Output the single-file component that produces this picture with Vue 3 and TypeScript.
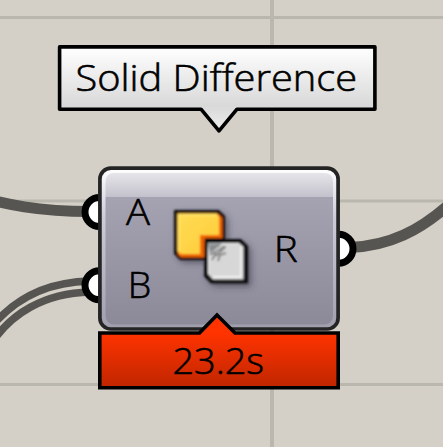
<script setup lang="ts">
interface Label { text: string; x: number; y: number; width: number }

const gridColumns: number[] = [272]
const gridRows: number[] = [17.5, 201, 384.5]

const wires = [
  { d: 'M-30 194 C5 205 40 211.5 90 211.5', width: 11 },
  { d: 'M-14 334 C12 298 48 282 90 281', width: 7.5 },
  { d: 'M-14 353 C8 311 48 293 90 292', width: 7.5 },
  { d: 'M350 247.5 C388 246 420 232 455 199', width: 11 },
]

const ports = [
  { x: 99.5, y: 212 },
  { x: 99.5, y: 285.2 },
  { x: 338.5, y: 248.8 },
]

const labels: Label[] = [
  { text: 'Solid Difference', x: 75.5, y: 91, width: 281.5 },
  { text: 'A', x: 126, y: 225, width: 24 },
  { text: 'B', x: 127.8, y: 298, width: 23.5 },
  { text: 'R', x: 273.8, y: 261.5, width: 24 },
  { text: '23.2s', x: 172.5, y: 373.5, width: 91.5 },
]
</script>

<template>
  <main class="canvas">
    <svg class="scene" width="443" height="447" viewBox="0 0 443 447">
      <defs>
        <linearGradient id="titleFill" x1="0" y1="0" x2="0" y2="1">
          <stop offset="0" stop-color="#ffffff" />
          <stop offset="0.7" stop-color="#d9d9d9" />
          <stop offset="1" stop-color="#eeeeee" />
        </linearGradient>
        <linearGradient id="bodyFill" x1="0" y1="0" x2="0" y2="1">
          <stop offset="0" stop-color="#a5a3b2" />
          <stop offset="1" stop-color="#8c8a99" />
        </linearGradient>
        <linearGradient id="edgeFill" x1="0" y1="0" x2="0" y2="1">
          <stop offset="0" stop-color="#ffffff" />
          <stop offset="0.3" stop-color="#ceccd9" />
          <stop offset="1" stop-color="#a09eac" />
        </linearGradient>
        <linearGradient id="gloss" x1="0" y1="0" x2="0" y2="1">
          <stop offset="0" stop-color="#e6e5ea" />
          <stop offset="1" stop-color="#c3c2cc" />
        </linearGradient>
        <linearGradient id="timeFill" gradientUnits="userSpaceOnUse" x1="0" y1="333" x2="0" y2="388">
          <stop offset="0" stop-color="#ff3300" />
          <stop offset="1" stop-color="#bf2600" />
        </linearGradient>
        <linearGradient id="yellow" x1="0" y1="0" x2="1" y2="1">
          <stop offset="0" stop-color="#ffdc55" />
          <stop offset="1" stop-color="#ffcb37" />
        </linearGradient>
        <filter id="iconShadow" x="-30%" y="-30%" width="170%" height="170%">
          <feDropShadow dx="3" dy="3" stdDeviation="3" flood-color="#30303a" flood-opacity="0.6" />
        </filter>
        <filter id="soft"><feGaussianBlur stdDeviation="0.85" /></filter>
      </defs>

      <g class="grid">
        <path v-for="x in gridColumns" :key="`x${x}`" :d="`M${x} 0V447`" stroke-width="4" />
        <path v-for="y in gridRows" :key="`y${y}`" :d="`M0 ${y}H443`" stroke-width="3" />
      </g>

      <path v-for="wire in wires" :key="wire.d" class="wire" :d="wire.d" :stroke-width="wire.width" />
      <circle v-for="port in ports" :key="`${port.x}-${port.y}`" class="port" :cx="port.x" :cy="port.y" r="14.5" />

      <rect x="100" y="168.2" width="238" height="160.8" rx="11" fill="url(#edgeFill)" />
      <path d="M105.5 197V182Q105.5 173 114.5 173H324Q333 173 333 182V197Z" fill="url(#gloss)" />
      <path d="M105.5 197H333V315Q333 324.5 323.5 324.5H115Q105.5 324.5 105.5 315Z" fill="url(#bodyFill)" />
      <rect class="node-outline" x="99.9" y="168.2" width="238.2" height="160.8" rx="11" />

      <g class="icon" filter="url(#iconShadow)">
        <g filter="url(#soft)">
          <path class="icon-edge" d="M174 210H219L225 216V242H211V260H180L174 254Z" />
          <path d="M177.5 213.5H218L222.5 218V238H205V257.5H181L177.5 254Z" fill="#ee6300" />
          <path d="M177.5 213.5H216.5L219 217V235H200V254H180.5L177.5 251Z" fill="url(#yellow)" />
          <path d="M179 251V215H217" fill="none" stroke="#ffe367" stroke-width="2" />
          <path class="icon-edge" d="M204.5 239H241L248 246V283.5H211L204 276.5Z" />
          <path d="M208 243H239L243.5 247V279.5H213L208 274Z" fill="#d7d7d7" />
          <path d="M209 274V244H239" fill="none" stroke="#e4e4e4" stroke-width="1.5" />
          <path d="M241 246V277H213" fill="none" stroke="#f2f2f2" stroke-width="1.8" />
          <path d="M208 243.5H222L210 254Z" fill="#8d9297" />
          <path d="M210 249L220 245M210 255L222 248M212 260L216 253M218 261L220 255L226 253M216 256L225 247M222 247H226" class="hatch" />
        </g>
      </g>

      <path class="title-box" d="M59.6 46.9H374.9V109.2H237L219 130.8L201 109.2H59.6Z" />
      <path class="time-box" d="M99.8 333H199.5L217 315L235 333H338.2V387.8H99.8Z" />

      <text
        v-for="label in labels"
        :key="label.text"
        :x="label.x"
        :y="label.y"
        :textLength="label.width"
        lengthAdjust="spacingAndGlyphs"
      >{{ label.text }}</text>
    </svg>
  </main>
</template>

<style>
body { margin: 0; }
</style>

<style scoped>
.canvas { width: 443px; height: 447px; overflow: hidden; background: #d4d0c8; }
.scene { display: block; }
.grid { stroke: #bab7af; }
.wire { fill: none; stroke: #575551; }
.port { fill: #fff; stroke: #000; stroke-width: 7; }
.node-outline { fill: none; stroke: #242424; stroke-width: 3.7; }
.icon-edge { fill: #101010; }
.hatch { fill: none; stroke: #858585; stroke-width: 2; }
.title-box { fill: url(#titleFill); stroke: #000; stroke-width: 3.6; stroke-linejoin: round; }
.time-box { fill: url(#timeFill); stroke: #000; stroke-width: 3.6; }
text { font-family: "Open Sans", "Noto Sans", sans-serif; font-size: 37.5px; font-weight: 300; fill: #000; stroke: #000; stroke-width: 0.6; }
</style>
